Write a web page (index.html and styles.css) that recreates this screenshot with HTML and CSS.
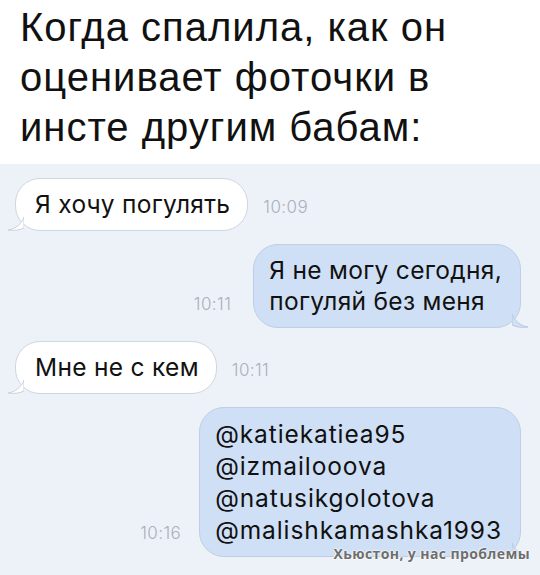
FILE: index.html
```html
<!DOCTYPE html>
<html lang="ru">
<head>
<meta charset="utf-8">
<link rel="stylesheet" href="styles.css">
</head>
<body>
<div class="page">
  <h1 class="title">Когда спалила, как он<br>оценивает фоточки в<br>инсте другим бабам:</h1>
  <div class="chat">
    <div class="row in">
      <div class="bubble white">Я хочу погулять
        <svg class="tail tail-l" width="16" height="14" viewBox="0 0 16 14"><path d="M16 0 C14 6 8 12 0 13 C6 14 12 13 16 11 Z" fill="#fff" stroke="#c9d1db" stroke-width="1"/></svg>
      </div>
      <span class="time">10:09</span>
    </div>
    <div class="row out">
      <span class="time">10:11</span>
      <div class="bubble blue">Я не могу сегодня,<br>погуляй без меня
        <svg class="tail tail-r" width="16" height="14" viewBox="0 0 16 14"><path d="M0 0 C2 6 8 12 16 13 C10 14 4 13 0 11 Z" fill="#cfe0f6" stroke="#b9c9dd" stroke-width="1"/></svg>
      </div>
    </div>
    <div class="row in">
      <div class="bubble white">Мне не с кем
        <svg class="tail tail-l" width="16" height="14" viewBox="0 0 16 14"><path d="M16 0 C14 6 8 12 0 13 C6 14 12 13 16 11 Z" fill="#fff" stroke="#c9d1db" stroke-width="1"/></svg>
      </div>
      <span class="time">10:11</span>
    </div>
    <div class="row out last">
      <span class="time">10:16</span>
      <div class="bubble blue tall">@katiekatiea95<br>@izmailooova<br>@natusikgolotova<br>@malishkamashka1993
        <svg class="tail tail-r" width="16" height="14" viewBox="0 0 16 14"><path d="M0 0 C2 6 8 12 16 13 C10 14 4 13 0 11 Z" fill="#cfe0f6" stroke="#b9c9dd" stroke-width="1"/></svg>
      </div>
    </div>
    <div class="watermark">Хьюстон, у нас проблемы</div>
  </div>
</div>
</body>
</html>
```
FILE: styles.css
```css
* { box-sizing: border-box; }
html, body { margin: 0; padding: 0; background: #fff; }
.page { width: 540px; height: 575px; display: flex; flex-direction: column; overflow: hidden; }
.title {
  margin: 0;
  padding: 2px 20px 0 20px;
  height: 164px;
  font-family: "Liberation Sans", Arial, sans-serif;
  font-weight: normal;
  font-size: 40px;
  letter-spacing: 1px;
  line-height: 50px;
  color: #111;
  white-space: nowrap;
}
.chat {
  position: relative;
  flex: 1;
  background: #edf2f9;
  padding: 14px 19px 0 15px;
  display: flex;
  flex-direction: column;
  gap: 13px;
  font-family: "Inter", "Liberation Sans", sans-serif;
}
.row { display: flex; align-items: flex-end; gap: 15px; }
.row.out { justify-content: flex-end; gap: 22px; }
.row.last { gap: 18px; }
.bubble {
  position: relative;
  font-size: 24.5px;
  letter-spacing: 0.3px;
  line-height: 31px;
  color: #111;
  padding: 10px 17px 10px 19px;
  border-radius: 25px;
  white-space: nowrap;
}
.bubble.white { background: #fff; border: 1px solid #cfd6df; }
.bubble.blue { background: #cfe0f6; border: 1px solid #bfcee2; padding-left: 15px; padding-right: 18px; }
.bubble.tall { line-height: 32px; letter-spacing: 0.9px; }
.time {
  font-size: 17px;
  font-weight: 300;
  letter-spacing: 0.4px;
  line-height: 18px;
  color: #a9b0ba;
  padding-bottom: 15px;
}
.tail { position: absolute; bottom: -1px; }
.tail-l { left: -8px; }
.tail-r { right: -8px; }
.watermark {
  position: absolute;
  right: 10px;
  bottom: 12px;
  font-family: "Open Sans", "Liberation Sans", sans-serif;
  font-weight: bold;
  font-size: 14px;
  letter-spacing: 0.4px;
  color: #6e6e6e;
  text-shadow: 0 0 2px #fff, 0 0 2px #fff, 0 0 1px #fff;
}
```
